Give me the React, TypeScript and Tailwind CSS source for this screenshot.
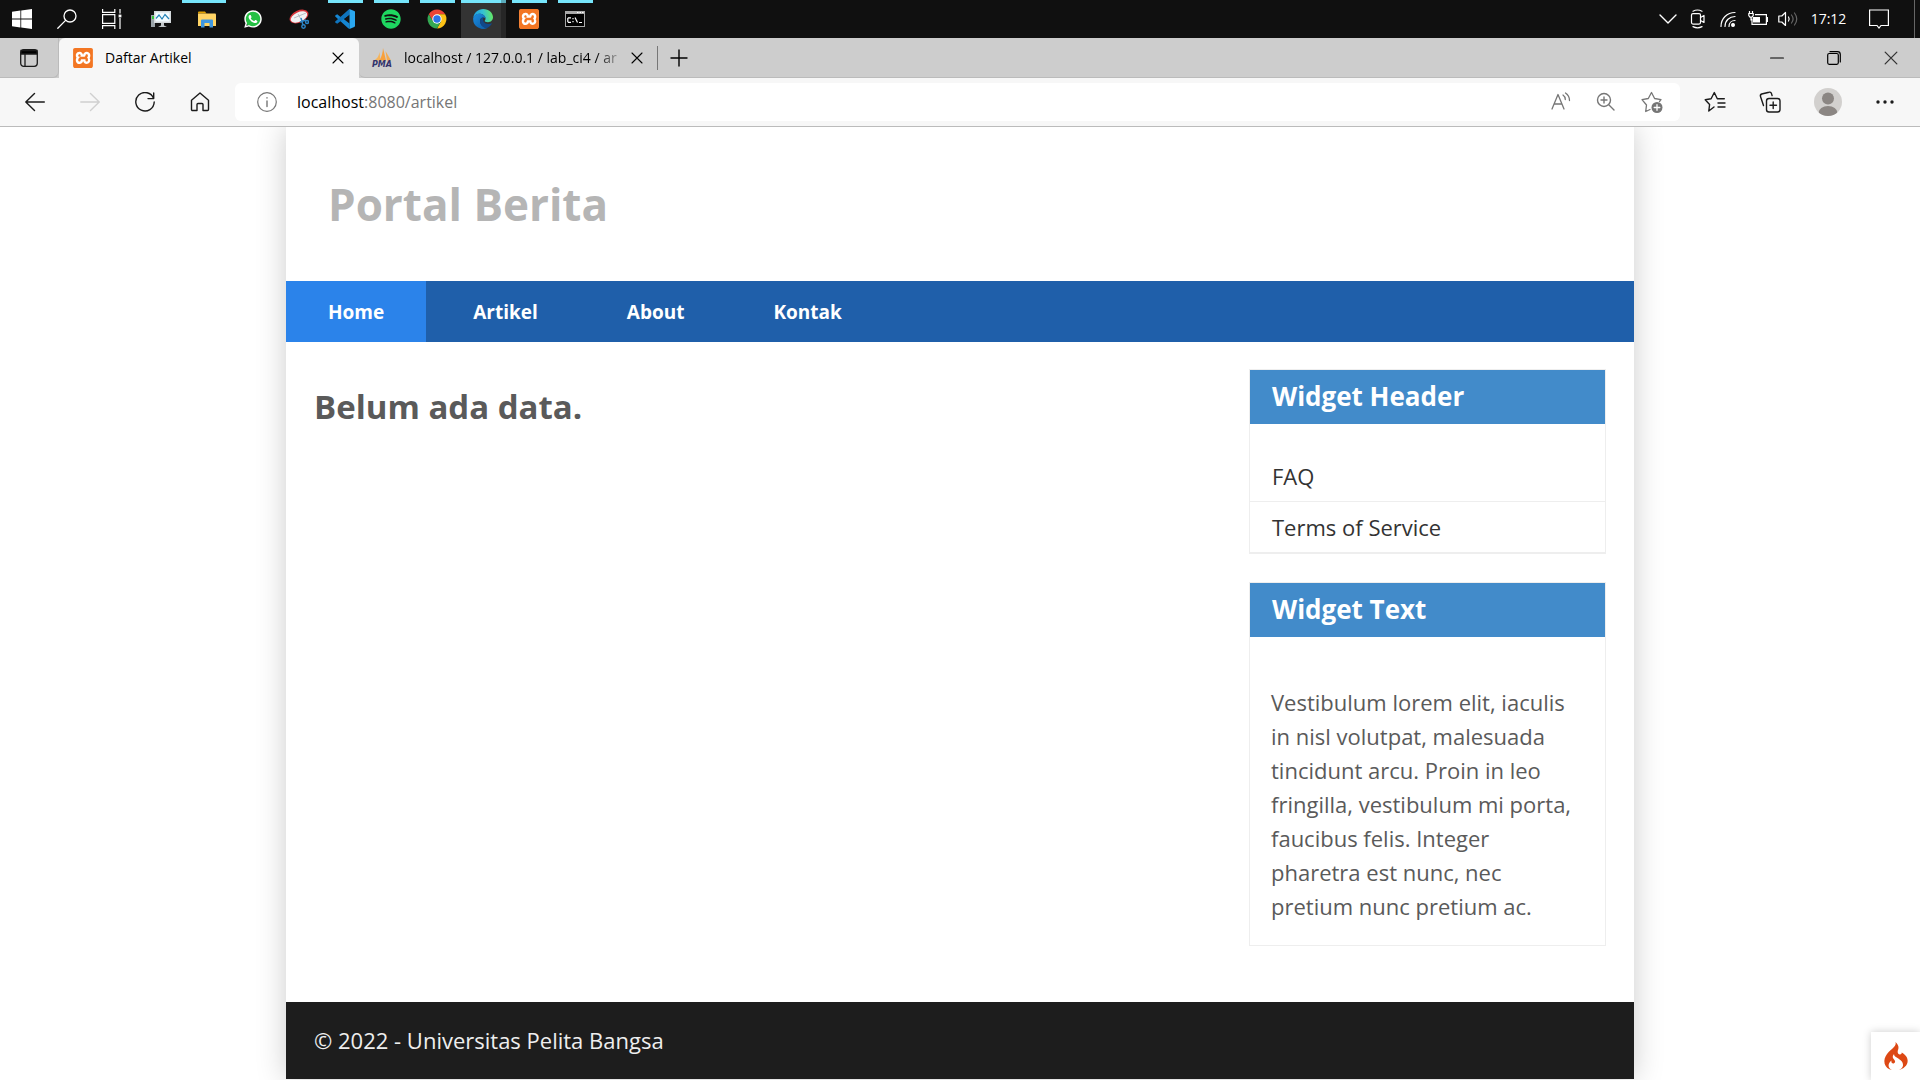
import type { ReactNode } from "react";
import { FaSpotify, FaWhatsapp } from "react-icons/fa";
import { SiCodeigniter, SiXampp } from "react-icons/si";

const line = { fill: "none", stroke: "currentColor", strokeLinecap: "round", strokeLinejoin: "round" } as const;

function Windows() {
  return (
    <svg viewBox="0 0 20 20" className="size-5" fill="#fff">
      <path d="M0 2.8 8.4 1.6v8H0zM9.2 1.5 20 0v9.6H9.2zM0 10.4h8.4v8L0 17.2zM9.2 10.4H20V20L9.2 18.5z" />
    </svg>
  );
}

function Search() {
  return (
    <svg viewBox="0 0 20 20" className="size-5 text-white" {...line} strokeWidth="1.3">
      <circle cx="13" cy="7" r="6" />
      <path d="M8.6 11.4.8 19.2" />
    </svg>
  );
}

function TaskView() {
  return (
    <svg viewBox="0 0 20 20" className="size-5" fill="none" stroke="#fff" strokeWidth="1.2">
      <path d="M.6 0v3.4h12.2V0M.6 20v-3.4h12.2V20M.6 5.6h12.2v8.8H.6zM18 0v4.5M18 9v11" />
      <path d="M16.6 5.6h2.8v2.8h-2.8z" fill="#fff" stroke="none" />
    </svg>
  );
}

function Monitor() {
  return (
    <svg viewBox="0 0 20 20" className="size-5">
      <path d="M0 6h4v12H0z" fill="#9aa3a8" />
      <path d="M1 7h2v3H1z" fill="#35c435" />
      <path d="M3 2h17v12H3z" fill="#d5dadd" />
      <path d="M4.500 3.500h14v9h-14z" fill="#f2fbff" />
      <path d="M5 9.500 8 6l3 4 3-4.500 4 4.500" fill="none" stroke="#2583b8" strokeWidth="1.200" />
      <path d="M10 14h3v2.500l3 1.500H7l3-1.500z" fill="#c3c8cb" />
    </svg>
  );
}

function Folder() {
  return (
    <svg viewBox="0 0 20 20" className="size-5">
      <path d="M1 3.500a1 1 0 0 1 1-1h6l1.500 2H1z" fill="#e2a100" />
      <path d="M1 4.500h17a1 1 0 0 1 1 1V17H1z" fill="#ffd465" />
      <path d="M4 18.500v-7a1 1 0 0 1 1-1h10a1 1 0 0 1 1 1v7h-3.500V14h-5v4.500z" fill="#3f97e0" />
    </svg>
  );
}

function Whatsapp() {
  return (
    <span className="relative flex size-5 items-center justify-center">
      <span className="absolute size-4 rounded-full bg-[#25c044]" />
      <FaWhatsapp className="relative size-5 text-white" />
    </span>
  );
}

function Snip() {
  return (
    <svg viewBox="0 0 20 20" className="size-5">
      <ellipse cx="10" cy="7.500" rx="10" ry="6" transform="rotate(-25 10 7.500)" fill="#d9353b" />
      <ellipse cx="10" cy="8" rx="8.800" ry="4.700" transform="rotate(-25 10 8)" fill="#f1f1f3" />
      <path d="M5 9 17 4M9 5l4 7" stroke="#a9b0b8" strokeWidth=".8" />
      <g fill="none" stroke="#2b86c9" strokeWidth="1.400">
        <path d="m12 9 2 7M17 11l-6 2" />
        <circle cx="14.500" cy="17.500" r="1.700" />
        <circle cx="18" cy="13" r="1.500" />
      </g>
    </svg>
  );
}

function VsCode() {
  return (
    <svg viewBox="0 0 20 20" className="size-5">
      <path d="M14.500 0 5.900 8.200 2.200 5.300.2 6.400v1l13 11.900L14.500 20V14.500L8.700 10 14.500 5.500z" fill="#1586d2" />
      <path d="M.2 13.600 2.200 14.700 14.500 5.500V0L.2 12.600z" fill="#0f74bd" />
      <path d="M14.500 0 19.200 2a1 1 0 0 1 .8 1v14a1 1 0 0 1-.8 1l-4.700 2z" fill="#2aa7f0" />
    </svg>
  );
}

function Chrome() {
  return (
    <svg viewBox="0 0 20 20" className="size-5">
      <path d="M1.800 5.300a9.500 9.500 0 0 1 16.400 0H10V10l-4.100 2.300z" fill="#ea4335" />
      <path d="M18.200 5.300A9.500 9.500 0 0 1 10 19.500l4.100-7.200L10 10V5.300z" fill="#fbc116" />
      <path d="M10 19.500A9.500 9.500 0 0 1 1.800 5.300l4.100 7L10 10l4.100 2.300z" fill="#34a853" />
      <circle cx="10" cy="10" r="4.700" fill="#fff" />
      <circle cx="10" cy="10" r="3.700" fill="#2b73e8" />
    </svg>
  );
}

function Edge() {
  return (
    <svg viewBox="0 0 20 20" className="size-5">
      <defs>
        <linearGradient id="edge-top" x1="0" y1=".4" x2="1" y2=".3">
          <stop offset="0" stopColor="#1b9de2" />
          <stop offset=".5" stopColor="#35c1d3" />
          <stop offset="1" stopColor="#66eb5e" />
        </linearGradient>
        <linearGradient id="edge-low" x1="0" y1="0" x2="1" y2="1">
          <stop offset="0" stopColor="#1b8ee0" />
          <stop offset="1" stopColor="#0c59a4" />
        </linearGradient>
      </defs>
      <path d="M.2 9C1 3.600 5 0 10.200 0 16 0 20 4 20 8.300c0 3-2.200 4.900-5 4.900-2.300 0-3.500-.7-3.300-1.400.3-.6.800-1 .8-2.400C12.500 6.500 9 4.600 6 4.800 3.200 5 1 7 .2 9z" fill="url(#edge-top)" />
      <path d="M.2 9C1.200 6.600 3.500 4.800 6 4.800c3.500 0 6.500 2 6.500 4.400C10 7.500 7 9 7 12c0 4 4 7.500 8 6.700A10 10 0 0 1 .2 9z" fill="url(#edge-low)" />
      <path d="M7 12c0-2.500 1.800-4 3.500-3.500-1.500 3 1 6.500 4.500 6.500 1.500 0 2.800-.4 3.600-.8.300 0 .4.200.2.500C17.500 17 15.500 18.600 13.500 19 9.500 18.500 7 15.500 7 12z" fill="#10488a" />
    </svg>
  );
}

function Xampp() {
  return (
    <span className="flex size-5 items-center justify-center rounded-sm bg-white">
      <SiXampp className="size-5 text-[#f37623]" />
    </span>
  );
}

function Terminal() {
  return (
    <svg viewBox="0 0 20 20" className="size-5">
      <path d="M0 2h20v16H0z" fill="#a9a9a9" />
      <path d="M1 5h18v12H1z" fill="#000" />
      <path d="M12 3h1.500v1H12zM14.500 3H16v1h-1.500zM17 3h1.500v1H17z" fill="#fff" />
      <g fill="none" stroke="#fff" strokeWidth="1.200">
        <path d="M6 8.800H3.500L2.800 9.600v3l.7.800H6M8 9v1.200M8 12v1.200M10 8.500l2.500 5M14 13.500h3" />
      </g>
    </svg>
  );
}

type App = { name: string; icon: ReactNode; bar?: string; active?: boolean };

const apps: App[] = [
  { name: "Resource Monitor", icon: <Monitor /> },
  { name: "File Explorer", icon: <Folder />, bar: "right-1 w-11" },
  { name: "WhatsApp", icon: <Whatsapp /> },
  { name: "Snipping Tool", icon: <Snip /> },
  { name: "Visual Studio Code", icon: <VsCode />, bar: "right-[5px] w-[35px]" },
  { name: "Spotify", icon: <FaSpotify className="size-5 text-[#1ed760]" />, bar: "right-[5px] w-[35px]" },
  { name: "Google Chrome", icon: <Chrome />, bar: "right-[5px] w-[35px]" },
  { name: "Microsoft Edge", icon: <Edge />, active: true },
  { name: "XAMPP", icon: <Xampp />, bar: "right-[5px] w-[35px]" },
  { name: "Command Prompt", icon: <Terminal />, bar: "right-[5px] w-[35px]" },
];

function Taskbar() {
  return (
    <div className="flex h-[38px] items-stretch bg-[#101010] text-white">
      <button aria-label="Start" className="flex w-11 items-center justify-center"><Windows /></button>
      <button aria-label="Search" className="flex w-[45px] items-center justify-center"><Search /></button>
      <button aria-label="Task view" className="flex w-[45px] items-center justify-center"><TaskView /></button>
      <div className="ml-1 flex">
        {apps.map((a) => (
          <button key={a.name} aria-label={a.name} className="relative flex w-[46px] items-center justify-center">
            {a.active && (
              <span className="absolute inset-y-0 left-px flex w-[45px]">
                <span className="flex-1 border-t-3 border-[#76e5fb] bg-[#333]" />
                <span className="w-[5px] border-t-3 border-[#5aabbb] bg-[#262626]" />
              </span>
            )}
            {a.bar && <span className={`absolute top-0 h-[3px] bg-[#76e5fb] ${a.bar}`} />}
            <span className="relative">{a.icon}</span>
          </button>
        ))}
      </div>
      <div className="ml-auto flex items-center">
        <button aria-label="Show hidden icons" className="flex w-[30px] justify-center">
          <svg viewBox="0 0 18 10" className="h-2.5 w-[18px]" {...line} strokeWidth="1.4"><path d="m1 1 8 8 8-8" /></svg>
        </button>
        <button aria-label="Meet now" className="flex w-[30px] justify-center">
          <svg viewBox="0 0 20 20" className="size-5" {...line} strokeWidth="1.2">
            <rect x="3.500" y="4.600" width="9" height="10.500" rx="1.500" />
            <path d="m12.500 8.500 3.500-2v7l-3.500-2M5 2.200c3-1.600 6-1.600 9 0M5 17.600c3 1.600 6 1.600 9 0" />
          </svg>
        </button>
        <button aria-label="Network" className="flex w-[30px] justify-center">
          <svg viewBox="0 0 20 20" className="size-5" {...line} strokeWidth="1.200">
            <path d="M3 17.500C3 9.500 9 3.500 17 3.500M7 17.500c0-6 4.500-10 10-10M11 17.500c0-3.500 2.500-6 6-6" />
            <circle cx="15" cy="16" r="1.400" fill="#fff" />
          </svg>
        </button>
        <button aria-label="Battery" className="flex w-[30px] justify-center">
          <svg viewBox="0 0 20 20" className="size-5" fill="none" stroke="#fff" strokeWidth="1.200">
            <path d="M7 5.600h11.400v9.800H4V9.600M18.500 8.500h1v4h-1M1.500 2v2.500M4.500 2v2.500M.8 4.500h4.400v2L4 8.200H2L.8 6.500zM3 8v3.500" />
            <path d="M5 8h7v5.500H5z" fill="#fff" stroke="none" />
          </svg>
        </button>
        <button aria-label="Volume" className="flex w-[30px] justify-center">
          <svg viewBox="0 0 20 20" className="size-5" {...line} strokeWidth="1.200">
            <path d="M.8 7h3L7.500 3.500v13L3.800 13h-3z" />
            <path d="M10.500 8c.9 1.300.9 2.700 0 4" />
            <path d="M13.500 6c2 2.500 2 5.500 0 8M16.500 4c3 4 3 8 0 12" stroke="#666" />
          </svg>
        </button>
        <button className="w-[51px] text-center font-['Open_Sans',sans-serif] text-[14px] leading-5">17:12</button>
        <button aria-label="Notifications" className="ml-[5px] flex w-10 justify-center">
          <svg viewBox="0 0 20 20" className="size-5" fill="none" stroke="#fff" strokeWidth="1.200">
            <path d="M.6 1h18.800v15.500H12L10 19l-2-2.500H.6z" />
          </svg>
        </button>
        <span className="ml-[15px] h-[38px] w-[6px] border-l border-[#666]" />
      </div>
    </div>
  );
}

function CloseX({ className }: { className: string }) {
  return (
    <svg viewBox="0 0 12 12" className={className} {...line} strokeWidth="1.100">
      <path d="m1 1 10 10M11 1 1 11" />
    </svg>
  );
}

function Pma() {
  return (
    <svg viewBox="0 0 20 20" className="size-5 overflow-visible">
      <path d="M2 12.500C5 11 7 8 7.500 4l1 8.500z" fill="#f5b45c" />
      <path d="M7.500 12.500C9.500 9 10.800 5 11 0l3 12.500z" fill="#f9a03a" />
      <path d="M13.500 3 19 12.500h-4z" fill="#f6a94b" />
      <text x="0" y="19" fontSize="8" fontWeight="700" fontStyle="italic" fontFamily="DejaVu Sans, sans-serif" fill="#33336b">PMA</text>
    </svg>
  );
}

function TabStrip() {
  return (
    <div className="flex h-10 items-stretch bg-[#cdcdcd] font-['Open_Sans',sans-serif] text-[14px] leading-5 text-black">
      <div className="flex w-[59px] rounded-br-md border-r border-b border-[#bbb]">
        <button aria-label="Tab actions" className="flex flex-1 items-center justify-center">
          <svg viewBox="0 0 18 18" className="size-[18px]" fill="none" stroke="#1b1b1b" strokeWidth="1.300">
            <rect x=".7" y=".7" width="16.600" height="16.600" rx="3" />
            <path d="M1 1.500h16v3.500H1z" fill="#000" />
            <path d="M5 5v12" />
          </svg>
        </button>
      </div>
      <div className="flex w-[300px] items-center rounded-t-md bg-[#f7f7f7] pr-[15px] pl-3.5">
        <Xampp />
        <button className="ml-3 flex-1 text-left">Daftar Artikel</button>
        <button aria-label="Close tab"><CloseX className="size-3" /></button>
      </div>
      <div className="flex flex-1 items-center rounded-bl-md border-b border-[#bbb] pl-[13px]">
        <Pma />
        <button className="ml-3 w-[220px] bg-linear-to-r from-black from-85% to-[#cdcdcd] bg-clip-text text-left whitespace-nowrap text-transparent">
          localhost / 127.0.0.1 / lab_ci4 / ar
        </button>
        <button aria-label="Close tab" className="ml-[7px]"><CloseX className="size-3" /></button>
        <span className="ml-3.5 h-6 w-px bg-[#777]" />
        <button aria-label="New tab" className="ml-3">
          <svg viewBox="0 0 18 18" className="size-[18px]" {...line} strokeWidth="1.400"><path d="M9 1v16M1 9h16" /></svg>
        </button>
        <div className="ml-auto flex items-center">
          <button aria-label="Minimize" className="flex w-[57px] justify-center">
            <svg viewBox="0 0 14 14" className="size-3.5" {...line} strokeWidth="1.200"><path d="M.6 7h12.800" /></svg>
          </button>
          <button aria-label="Restore" className="flex w-[57px] justify-center">
            <svg viewBox="0 0 14 14" className="size-3.5" {...line} strokeWidth="1.200">
              <rect x=".7" y="2.500" width="10.600" height="10.800" rx="1.500" />
              <path d="M3 .7h7.500a2.800 2.800 0 0 1 2.800 2.800V11" />
            </svg>
          </button>
          <button aria-label="Close window" className="flex w-[58px] justify-center text-[#333]"><CloseX className="size-3.5" /></button>
        </div>
      </div>
    </div>
  );
}

function Toolbar() {
  return (
    <div className="flex h-[49px] items-center border-b border-[#bbb] bg-[#f7f7f7] pl-[7px] text-[#1b1b1b]">
      <button aria-label="Back" className="flex w-[55px] justify-center">
        <svg viewBox="0 0 20 20" className="size-5" {...line} strokeWidth="1.400"><path d="M19.300 10H.8M9.500 1.500.8 10l8.700 8.500" /></svg>
      </button>
      <button aria-label="Forward" className="flex w-[55px] justify-center text-[#d0d0d0]">
        <svg viewBox="0 0 20 20" className="size-5" {...line} strokeWidth="1.400"><path d="M.8 10h18.500M10.500 1.500 19.200 10l-8.700 8.500" /></svg>
      </button>
      <button aria-label="Reload" className="flex w-[55px] justify-center">
        <svg viewBox="0 0 20 20" className="size-5" {...line} strokeWidth="1.400"><path d="M18.600 6.500A9.200 9.200 0 1 0 19.200 10M18.700 1v5.600H13" /></svg>
      </button>
      <button aria-label="Home" className="flex w-[55px] justify-center">
        <svg viewBox="0 0 20 20" className="size-5" {...line} strokeWidth="1.400">
          <path d="M1.500 8.200 10 1l8.500 7.200v9.300a1 1 0 0 1-1 1H13v-6a1 1 0 0 0-1-1H8a1 1 0 0 0-1 1v6H2.500a1 1 0 0 1-1-1z" />
        </svg>
      </button>
      <div className="ml-2 flex h-[38px] flex-1 items-center rounded-md bg-white pr-[17px] pl-[22px] text-[#767676]">
        <button aria-label="Site information">
          <svg viewBox="0 0 20 20" className="size-5" {...line} strokeWidth="1.200">
            <circle cx="10" cy="10" r="9.300" />
            <path d="M10 9v5.500M10 5.700v.4" strokeWidth="1.400" />
          </svg>
        </button>
        <button aria-label="Address" className="ml-5 flex-1 text-left font-['Open_Sans',sans-serif] text-[16px] leading-6">
          <span className="text-black">localhost</span>:8080/artikel
        </button>
        <div className="flex items-center gap-[25px]">
          <button aria-label="Read aloud">
            <svg viewBox="0 0 20 20" className="size-5" {...line} strokeWidth="1.300">
              <path d="M1 17 7 2.500 13 17M3.200 12h7.600M12 3c1.500 1 2.300 2.500 2.300 4.500M14.500 1c2.500 1.700 4 4 4 7.500" />
            </svg>
          </button>
          <button aria-label="Zoom">
            <svg viewBox="0 0 20 20" className="size-5" {...line} strokeWidth="1.400">
              <circle cx="8" cy="8" r="6.500" />
              <path d="M13 13l5 5M8 5v6M5 8h6" />
            </svg>
          </button>
          <button aria-label="Add to favorites">
            <svg viewBox="0 0 22 22" className="size-[22px]" {...line} strokeWidth="1.300">
              <path d="M9 18.500 4.700 20.500l.8-6.500L1 8.700l6.300-1.200L10.500 1.500l3.100 6 6.400 1.200-1.500 1.800" />
              <circle cx="16" cy="16.500" r="5.500" fill="currentColor" stroke="none" />
              <path d="M16 13.700v5.600M13.200 16.500h5.600" stroke="#fff" />
            </svg>
          </button>
        </div>
      </div>
      <div className="flex items-center pl-[7px]">
        <button aria-label="Favorites" className="flex w-[55px] justify-center">
          <svg viewBox="0 0 22 22" className="size-[22px]" {...line} strokeWidth="1.400">
            <path d="m10 16-5.200 4 .8-6.500L1.200 8.700l5.900-1 3.200-6.200 3 6.200h7M14 12h7M14 16h7" />
          </svg>
        </button>
        <button aria-label="Collections" className="flex w-[55px] justify-center">
          <svg viewBox="0 0 22 22" className="size-[22px]" {...line} strokeWidth="1.400">
            <rect x="7.500" y="7.500" width="13.500" height="13.500" rx="2.500" />
            <path d="M14.200 11v6.500M11 14.200h6.500M4.500 14.500 1.500 5.500A2 2 0 0 1 2.700 3L10 1.200a2 2 0 0 1 2.500 1.400l.6 2" />
          </svg>
        </button>
        <button aria-label="Profile" className="flex w-[61px] justify-center">
          <svg viewBox="0 0 28 28" className="size-7">
            <defs><clipPath id="avatar"><circle cx="14" cy="14" r="14" /></clipPath></defs>
            <g clipPath="url(#avatar)">
              <path d="M0 0h28v28H0z" fill="#d2d0ce" />
              <circle cx="14" cy="10.500" r="6" fill="#8b8683" />
              <ellipse cx="14" cy="25" rx="9.500" ry="7" fill="#8b8683" />
            </g>
          </svg>
        </button>
        <button aria-label="Settings and more" className="flex w-[62px] justify-center pr-2">
          <svg viewBox="0 0 18 4" className="h-1 w-[18px]" fill="currentColor">
            <circle cx="2" cy="2" r="1.700" /><circle cx="9" cy="2" r="1.700" /><circle cx="16" cy="2" r="1.700" />
          </svg>
        </button>
      </div>
    </div>
  );
}

function Widget({ title, children }: { title: string; children: ReactNode }) {
  return (
    <section className="mb-7 border border-[#eee]">
      <h3 className="bg-[#428bca] px-[22px] pb-px text-[26px] leading-[53px] font-bold text-white">{title}</h3>
      {children}
    </section>
  );
}

function Site() {
  return (
    <div className="flex flex-1 flex-col overflow-hidden bg-white pb-px font-['Open_Sans',sans-serif] text-[22px] leading-[34px] text-[#5a5a5a]">
      <div className="mx-auto flex w-full max-w-[1348px] flex-1 flex-col bg-white shadow-[0_0_28px_#ccc]">
        <header className="px-[42px] py-[47px]">
          <h1 className="text-[44px] leading-[60px] font-bold text-[#b5b5b5]">Portal Berita</h1>
        </header>
        <nav className="flex gap-[5px] bg-[#1f5faa] text-[19px] leading-[60px] font-bold text-white">
          <a href="#home" className="bg-[#2b83ea] px-[42px] pt-px">Home</a>
          <a href="#artikel" className="px-[42px] pt-px">Artikel</a>
          <a href="#about" className="px-[42px] pt-px">About</a>
          <a href="#kontak" className="px-[42px] pt-px">Kontak</a>
        </nav>
        <div className="flex flex-1 px-7 pt-[27px] pb-7">
          <main className="flex-1 pt-[15px]">
            <h2 className="text-[33px] leading-[46px] font-bold">Belum ada data.</h2>
          </main>
          <aside className="w-[357px]">
            <Widget title="Widget Header">
              <ul className="pt-[27px] text-[#333]">
                <li className="border-b border-[#eee]"><a href="#faq" className="block px-[22px] py-2">FAQ</a></li>
                <li className="border-b border-[#eee]"><a href="#terms" className="block px-[22px] py-2">Terms of Service</a></li>
              </ul>
            </Widget>
            <Widget title="Widget Text">
              <p className="px-[21px] pt-12 pb-[22px]">
                Vestibulum lorem elit, iaculis in nisl volutpat, malesuada tincidunt arcu. Proin in leo
                fringilla, vestibulum mi porta, faucibus felis. Integer pharetra est nunc, nec pretium nunc
                pretium ac.
              </p>
            </Widget>
          </aside>
        </div>
        <footer className="bg-[#1d1d1d] px-7 py-[21px] leading-[35px] text-[#eee]">
          <p>© 2022 - Universitas Pelita Bangsa</p>
        </footer>
      </div>
    </div>
  );
}

export default function App() {
  return (
    <div className="flex min-h-screen flex-col">
      <Taskbar />
      <TabStrip />
      <Toolbar />
      <Site />
      <button aria-label="CodeIgniter debug toolbar" className="fixed right-0 bottom-0 flex h-12 w-[49px] items-center justify-center bg-white shadow-[0_0_8px_#ccc]">
        <SiCodeigniter className="size-7 text-[#dd4814]" />
      </button>
    </div>
  );
}
